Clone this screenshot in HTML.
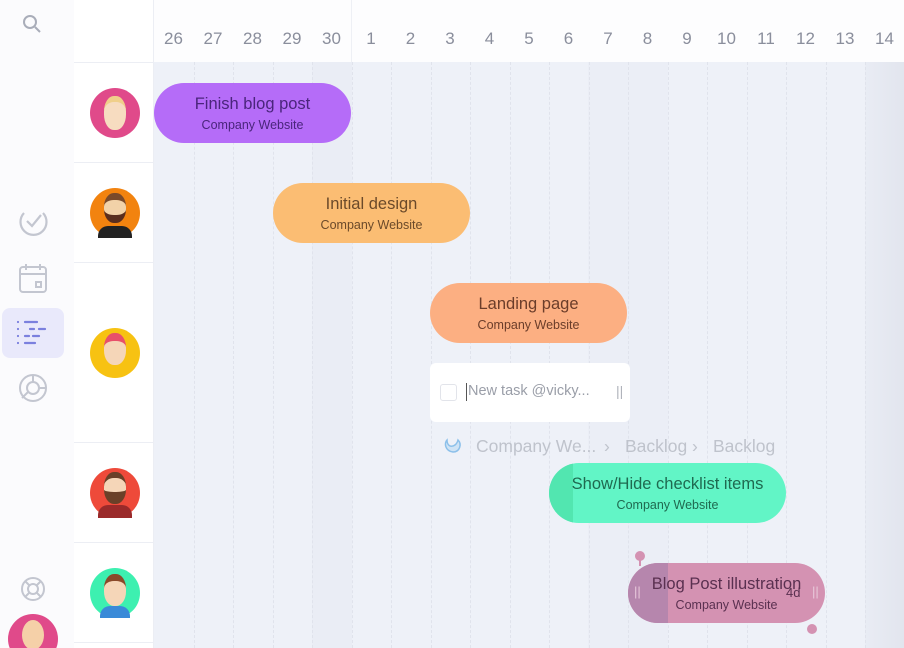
<!DOCTYPE html>
<html><head><meta charset="utf-8"><style>
*{margin:0;padding:0;box-sizing:border-box}
html,body{width:904px;height:648px;overflow:hidden}
body{font-family:"Liberation Sans",sans-serif;background:#eef1f8;position:relative}
.abs{position:absolute}
.side{left:0;top:0;width:74px;height:648px;background:#fbfbfd}
.avcol{left:74px;top:0;width:80px;height:648px;background:#fff;border-right:1px solid #eceef4}
.head{left:154px;top:0;width:750px;height:62px;background:#fdfdfe}
.day{top:29px;width:40px;text-align:center;font-size:17px;color:#8a8e9c}
.vl{top:62px;height:586px;border-left:1px dashed #e0e3ec}
.hl{left:74px;width:80px;height:1px;background:#eceef4}
.av{width:50px;height:50px;border-radius:50%;left:90px}
.bar{border-radius:30px;height:60px;text-align:center;overflow:hidden}
.bar .t{font-size:16.5px;margin-top:12px}
.bar .s{font-size:12.5px;margin-top:4px}
</style></head><body>
<div class="abs side"></div>
<div class="abs avcol"></div>
<div class="abs" style="left:312px;top:62px;width:40px;height:586px;background:#eaedf5"></div>
<div class="abs" style="left:588px;top:62px;width:80px;height:586px;background:#ebeef6"></div>
<div class="abs" style="left:865px;top:62px;width:39px;height:586px;background:linear-gradient(90deg,#e9ecf4,#e2e5ee)"></div>
<div class="abs head"></div>
<div class="abs" style="left:351px;top:0;width:1px;height:62px;background:#eef0f5"></div>
<div id="days"></div>
<script>
var d=[26,27,28,29,30,1,2,3,4,5,6,7,8,9,10,11,12,13,14],h='';
for(var i=0;i<19;i++){var x=154+i*39.5;h+='<div class="abs day" style="left:'+(x-0.5)+'px">'+d[i]+'</div>';if(i>0)h+='<div class="abs vl" style="left:'+x+'px"></div>';}
document.getElementById('days').outerHTML=h;
</script>
<div class="abs hl" style="top:62px"></div>
<div class="abs hl" style="top:162px"></div>
<div class="abs hl" style="top:262px"></div>
<div class="abs hl" style="top:442px"></div>
<div class="abs hl" style="top:542px"></div>
<div class="abs hl" style="top:642px"></div>
<svg class="abs" style="left:20px;top:12px" width="24" height="24" viewBox="0 0 24 24" fill="none" stroke="#a9adb9" stroke-width="2"><circle cx="10" cy="10" r="6"/><path d="M15 15l5 5"/></svg>
<svg class="abs" style="left:16px;top:205px" width="34" height="34" viewBox="0 0 34 34" fill="none" stroke="#c3c6d0" stroke-width="2.2"><path d="M8 8A13 13 0 1 0 27 8"/><path d="M11 16l5 5 9-11"/></svg>
<svg class="abs" style="left:18px;top:262px" width="30" height="32" viewBox="0 0 30 32" fill="none" stroke="#c3c6d0" stroke-width="2"><rect x="2" y="5" width="26" height="25" rx="3"/><path d="M2 12h26M8 2v6M22 2v6"/><rect x="18" y="20" width="5" height="5"/></svg>
<div class="abs" style="left:2px;top:308px;width:62px;height:50px;border-radius:8px;background:#e9e9fb"></div>
<svg class="abs" style="left:15px;top:319px" width="34" height="28" viewBox="0 0 34 28" stroke="#7b80de" stroke-width="2.2" stroke-linecap="round"><path d="M3 3h0M10 3h12M3 10h0M15 10h4M24 10h6M3 17h0M10 17h4M18 17h6M3 24h0M10 24h10"/></svg>
<svg class="abs" style="left:17px;top:372px" width="32" height="32" viewBox="0 0 32 32" fill="none" stroke="#c3c6d0" stroke-width="2"><circle cx="16" cy="16" r="13"/><circle cx="16" cy="16" r="6"/><path d="M16 3v7M22 16h7M11 20l-6 6"/></svg>
<svg class="abs" style="left:20px;top:576px" width="26" height="26" viewBox="0 0 26 26" fill="none" stroke="#c3c6d0" stroke-width="2"><circle cx="13" cy="13" r="11"/><circle cx="13" cy="13" r="5"/><path d="M5 5l4 4M21 5l-4 4M5 21l4-4M21 21l-4-4"/></svg>
<div class="abs" style="left:8px;top:614px;width:50px;height:50px;border-radius:50%;background:#e04a8a"></div>
<div class="abs" style="left:22px;top:620px;width:22px;height:30px;border-radius:50%;background:#f5d0a8"></div>
<div class="abs av" style="top:88px;background:#e04a8a"></div><div class="abs" style="left:104px;top:96px;width:22px;height:34px;border-radius:45%;background:#f7dcc0;border-top:6px solid #f0cf8a"></div>
<div class="abs av" style="top:188px;background:#f2830f"></div><div class="abs" style="left:104px;top:193px;width:22px;height:30px;border-radius:45%;background:#f2d2a8;border-top:7px solid #7a4a2a;border-bottom:8px solid #5a2e1e"></div><div class="abs" style="left:98px;top:226px;width:34px;height:12px;border-radius:10px 10px 0 0;background:#222"></div>
<div class="abs av" style="top:328px;background:#f7c212"></div><div class="abs" style="left:104px;top:333px;width:22px;height:32px;border-radius:45%;background:#f5d6b8;border-top:8px solid #e8506a"></div>
<div class="abs av" style="top:468px;background:#ee4a3a"></div><div class="abs" style="left:104px;top:472px;width:22px;height:32px;border-radius:45%;background:#f5d6b8;border-top:6px solid #6a4028;border-bottom:12px solid #6a4028"></div><div class="abs" style="left:98px;top:505px;width:34px;height:13px;border-radius:10px 10px 0 0;background:#9a2a2a"></div>
<div class="abs av" style="top:568px;background:#3df0b0"></div><div class="abs" style="left:104px;top:574px;width:22px;height:32px;border-radius:45%;background:#f5d6b8;border-top:7px solid #8a4a2a"></div><div class="abs" style="left:100px;top:606px;width:30px;height:12px;border-radius:10px 10px 0 0;background:#3a8ad8"></div>
<div class="abs bar" style="left:154px;top:83px;width:197px;background:#b56cf8;color:#4a257c"><div class="t">Finish blog post</div><div class="s">Company Website</div></div>
<div class="abs bar" style="left:273px;top:183px;width:197px;background:#fbbd73;color:#6b4a2a"><div class="t">Initial design</div><div class="s">Company Website</div></div>
<div class="abs bar" style="left:430px;top:283px;width:197px;background:#fcaf82;color:#6b3d2a"><div class="t">Landing page</div><div class="s">Company Website</div></div>
<div class="abs" style="left:430px;top:363px;width:200px;height:59px;background:#fff;border-radius:6px"></div>
<div class="abs" style="left:440px;top:384px;width:17px;height:17px;border:1px solid #e2e4ea;border-radius:3px"></div>
<div class="abs" style="left:466px;top:383px;width:1px;height:18px;background:#555"></div>
<div class="abs" style="left:468px;top:383px;font-size:14.5px;color:#9a9ea8">New task @vicky...</div>
<div class="abs" style="left:616px;top:383px;font-size:14px;color:#b0b3bb">||</div>
<svg class="abs" style="left:443px;top:437px" width="20" height="18" viewBox="0 0 20 18"><path d="M4 3C1 6 2 14 10 15c7 0 9-8 5-12-1 4-4 7-8 6C5 8 4 6 4 3z" fill="#cfe3f5" stroke="#8cc0ea" stroke-width="1.5"/></svg>
<div class="abs" style="left:476px;top:436px;font-size:17.5px;color:#bfc3cc;white-space:nowrap">Company We...</div>
<div class="abs" style="left:604px;top:436px;font-size:17.5px;color:#bfc3cc">›</div>
<div class="abs" style="left:625px;top:436px;font-size:17.5px;color:#bfc3cc">Backlog</div>
<div class="abs" style="left:692px;top:436px;font-size:17.5px;color:#bfc3cc">›</div>
<div class="abs" style="left:713px;top:436px;font-size:17.5px;color:#bfc3cc">Backlog</div>
<div class="abs bar" style="left:549px;top:463px;width:237px;background:#62f5c6;color:#1f6a50"><div class="abs" style="left:0;top:0;width:24px;height:60px;background:#52e6b0"></div><div class="t" style="position:relative">Show/Hide checklist items</div><div class="s" style="position:relative">Company Website</div></div>
<div class="abs bar" style="left:628px;top:563px;width:197px;background:#d492b2;color:#5a3050"><div class="abs" style="left:0;top:0;width:40px;height:60px;background:#b686ad"></div><div class="t" style="position:relative">Blog Post illustration</div><div class="s" style="position:relative">Company Website</div><div class="abs" style="left:158px;top:22px;font-size:13px">4d</div><div class="abs" style="left:6px;top:21px;font-size:13px;color:#e8c8da">||</div><div class="abs" style="left:184px;top:21px;font-size:13px;color:#e8c8da">||</div></div>
<div class="abs" style="left:635px;top:551px;width:10px;height:10px;border-radius:50%;background:#d492b2"></div>
<div class="abs" style="left:639px;top:558px;width:2px;height:8px;background:#d492b2"></div>
<div class="abs" style="left:807px;top:624px;width:10px;height:10px;border-radius:50%;background:#d492b2"></div>
</body></html>
